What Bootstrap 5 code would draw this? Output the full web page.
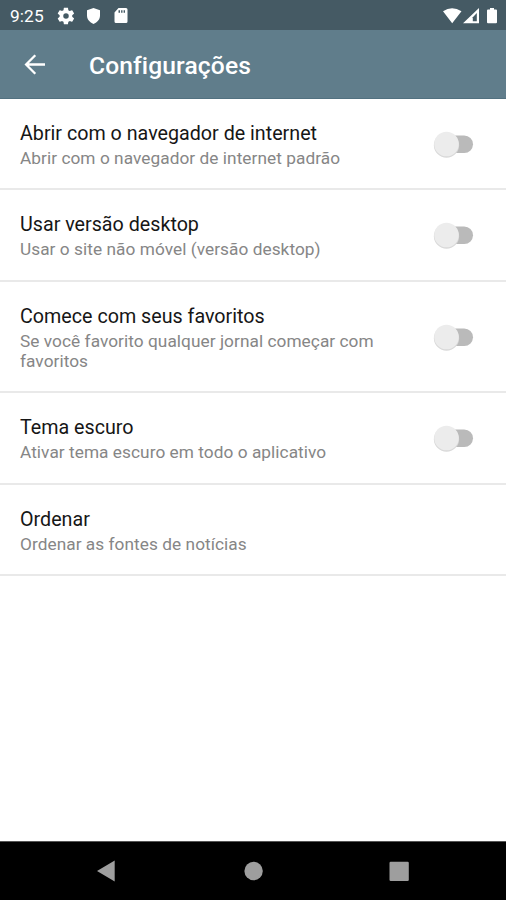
<!DOCTYPE html>
<html lang="pt-BR">
<head>
<meta charset="utf-8">
<meta name="viewport" content="width=device-width, initial-scale=1">
<title>Configurações</title>
<link href="https://cdn.jsdelivr.net/npm/bootstrap@5.3.0/dist/css/bootstrap.min.css" rel="stylesheet">
<style>
body{font-family:Roboto,sans-serif;height:900px;overflow:hidden}
svg{display:block;flex:none}
.status-bar{height:30px;background:#455a64;padding:2px 8px 0 10px}
.clock{font-size:17.3px;line-height:28px;width:46px;letter-spacing:.1px}
.app-bar{height:69px;background:#607d8b;padding:2px 23px 0 23px;border-bottom:1px solid #527180}
.app-title{font-size:24.6px;font-weight:500;line-height:30px;letter-spacing:.12px;margin:2px 0 0 42px}
.pref{padding:22px 32px 0 20px;height:91.4px;border-bottom:2px solid #e9e9e9}
.pref-tall{height:111.5px}
.pref-copy{width:370px}
.pref-name{font-size:19.7px;line-height:25px;color:#161616}
.pref-note{font-size:17.25px;line-height:20px;letter-spacing:.05px;color:#868686;margin-top:2px}
.toggle{margin-top:9px}
.pref-tall .toggle{margin-top:19px}
.nav-keys{height:59px;background:#000;border-top:1px solid #555}
</style>
</head>
<body class="d-flex flex-column bg-white">
<header class="text-white">
  <div class="status-bar d-flex align-items-center">
    <span class="clock">9:25</span>
    <svg width="20" height="20" viewBox="0 0 24 24" fill="#fff"><path d="M19.4 13c0-.3.1-.6.1-1s0-.7-.1-1l2.1-1.600c.2-.1.2-.4.1-.6l-2-3.500c-.1-.2-.4-.3-.6-.2l-2.500 1c-.5-.4-1.100-.7-1.700-1l-.4-2.600c0-.3-.2-.5-.5-.5h-4c-.2 0-.4.2-.5.4l-.4 2.700c-.6.2-1.100.6-1.700 1l-2.500-1c-.2-.1-.5 0-.6.2l-2 3.500c-.1.2-.1.5.1.6l2.100 1.600c0 .3-.1.6-.1 1s0 .7.1 1l-2.100 1.600c-.2.2-.2.400-.1.6l2 3.500c.1.2.4.300.6.200l2.500-1c.5.4 1.100.7 1.700 1l.4 2.600c0 .3.2.5.5.5h4c.2 0 .5-.2.5-.4l.4-2.700c.6-.2 1.100-.6 1.700-1l2.500 1c.2.1.5 0 .6-.2l2-3.500c.1-.2.1-.5-.1-.6L19.400 13zM12 15.300a3.300 3.300 0 1 1 0-6.600 3.300 3.300 0 0 1 0 6.600z"/></svg>
    <svg class="ms-2" width="19" height="20" viewBox="0 0 19 20" fill="#fff"><path d="M9.500 2 16 4.300V9.500c0 3.800-2.600 6.900-6.500 8.500C5.600 16.400 3 13.300 3 9.500V4.300z"/></svg>
    <svg class="ms-2" width="20" height="20" viewBox="0 0 20 20" fill="#fff"><path fill-rule="evenodd" d="M7.500 2H15q1.500 0 1.500 1.500v12Q16.500 17 15 17H5q-1.500 0-1.500-1.500V6.500zM7.500 4.200v2.600H9V4.200zm2.600 0v2.600h1.400V4.200zm2.500 0v2.600H14V4.200z"/></svg>
    <svg class="ms-auto" width="56" height="20" viewBox="0 0 56 20" fill="#fff"><path d="M1 5.200Q10-.8 19.500 5.200L10.200 17.300zM37 2V17.300H21z"/><path d="M34.800 7v8.300h-4V11.200z" fill="#455a64"/><path d="M46 3.500h2V2h4v1.500h2q1 0 1 1v11.800q0 1-1 1h-8q-1 0-1-1V4.500q0-1 1-1z"/></svg>
  </div>
  <div class="app-bar d-flex align-items-center">
    <svg width="24" height="24" viewBox="0 0 24 24" fill="none" stroke="#fff" stroke-width="2.300"><path d="M22 11.500H3.500M12.300 2.300 3.100 11.500l9.200 9.200"/></svg>
    <h1 class="app-title">Configurações</h1>
  </div>
</header>
<main class="flex-grow-1">
  <ul class="list-unstyled mb-0">
    <li class="pref d-flex justify-content-between align-items-start"><div class="pref-copy"><div class="pref-name">Abrir com o navegador de internet</div><div class="pref-note">Abrir com o navegador de internet padrão</div></div>
      <svg class="toggle" width="42" height="30" viewBox="0 0 42 30"><rect x="6" y="5.500" width="35" height="17.500" rx="8.750" fill="#bababa"/><circle cx="14.500" cy="15.200" r="12.600" fill="#d9d9d9"/><circle cx="14.500" cy="14" r="12.300" fill="#ececec"/></svg></li>
    <li class="pref d-flex justify-content-between align-items-start"><div class="pref-copy"><div class="pref-name">Usar versão desktop</div><div class="pref-note">Usar o site não móvel (versão desktop)</div></div>
      <svg class="toggle" width="42" height="30" viewBox="0 0 42 30"><rect x="6" y="5.500" width="35" height="17.500" rx="8.750" fill="#bababa"/><circle cx="14.500" cy="15.200" r="12.600" fill="#d9d9d9"/><circle cx="14.500" cy="14" r="12.300" fill="#ececec"/></svg></li>
    <li class="pref pref-tall d-flex justify-content-between align-items-start"><div class="pref-copy"><div class="pref-name">Comece com seus favoritos</div><div class="pref-note">Se você favorito qualquer jornal começar com favoritos</div></div>
      <svg class="toggle" width="42" height="30" viewBox="0 0 42 30"><rect x="6" y="5.500" width="35" height="17.500" rx="8.750" fill="#bababa"/><circle cx="14.500" cy="15.200" r="12.600" fill="#d9d9d9"/><circle cx="14.500" cy="14" r="12.300" fill="#ececec"/></svg></li>
    <li class="pref d-flex justify-content-between align-items-start"><div class="pref-copy"><div class="pref-name">Tema escuro</div><div class="pref-note">Ativar tema escuro em todo o aplicativo</div></div>
      <svg class="toggle" width="42" height="30" viewBox="0 0 42 30"><rect x="6" y="5.500" width="35" height="17.500" rx="8.750" fill="#bababa"/><circle cx="14.500" cy="15.200" r="12.600" fill="#d9d9d9"/><circle cx="14.500" cy="14" r="12.300" fill="#ececec"/></svg></li>
    <li class="pref"><div class="pref-copy"><div class="pref-name">Ordenar</div><div class="pref-note">Ordenar as fontes de notícias</div></div></li>
  </ul>
</main>
<footer class="nav-keys">
  <svg width="506" height="58" viewBox="0 0 506 58" fill="#9e9e9e"><path d="M97 29 114.700 18.500v21z"/><circle cx="253.600" cy="29" r="9.200"/><rect x="389.500" y="19.700" width="19.300" height="19.300" rx="1.200"/></svg>
</footer>
<script src="https://cdn.jsdelivr.net/npm/bootstrap@5.3.0/dist/js/bootstrap.bundle.min.js"></script>
</body>
</html>
